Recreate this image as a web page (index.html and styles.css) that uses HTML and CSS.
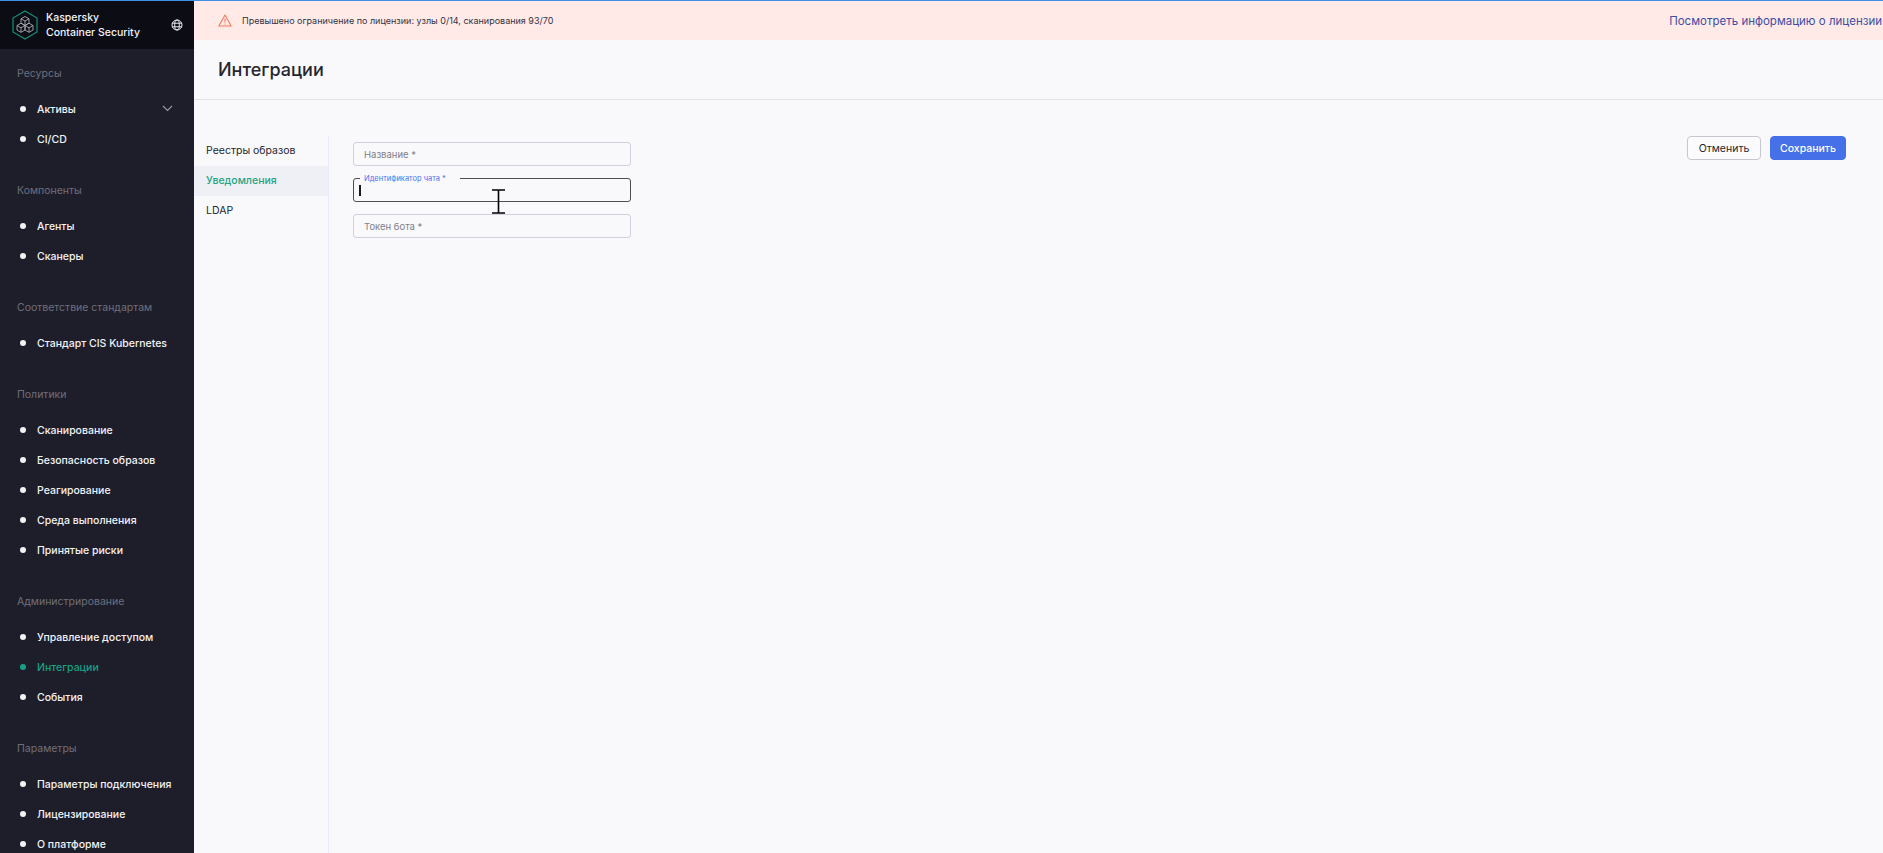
FILE: index.html
```html
<!DOCTYPE html>
<html lang="ru">
<head>
    <meta charset="UTF-8">
    <title>Интеграции</title>
    <link rel="stylesheet" href="styles.css">
</head>
<body>
    <div class="top-line"></div>
    <div class="app">
        <aside class="sidebar">
            <div class="brand">
                <svg class="brand-logo" width="26" height="30" viewBox="0 0 26 30" fill="none">
                    <path d="M13 1 L25 8 V22 L13 29 L1 22 V8 Z" stroke="#14907a" stroke-width="1.2"/>
                    <g stroke="#a9a9b2" stroke-width="0.9">
                        <path d="M13 6.5 L17 8.8 V13.2 L13 15.5 L9 13.2 V8.8 Z M9 8.8 L13 11 L17 8.8 M13 11 V15.5"/>
                        <path d="M9 13.2 L13 15.5 V20 L9 22.3 L5 20 V15.5 Z M5 15.5 L9 17.8 L13 15.5 M9 17.8 V22.3"/>
                        <path d="M17 13.2 L21 15.5 V20 L17 22.3 L13 20 V15.5 Z M13 15.5 L17 17.8 L21 15.5 M17 17.8 V22.3"/>
                    </g>
                </svg>
                <div class="brand-name">Kaspersky<br>Container Security</div>
                <svg class="globe" width="12" height="12" viewBox="0 0 12 12" fill="none" stroke="#e8e8ec" stroke-width="1">
                    <circle cx="6" cy="6" r="5"/>
                    <ellipse cx="6" cy="6" rx="2.3" ry="5"/>
                    <path d="M1 4.2 H11 M1 7.8 H11"/>
                </svg>
            </div>
            <nav class="menu">
                <div class="menu-group">
                    <div class="menu-title">Ресурсы</div>
                    <a class="menu-item">Активы
                        <svg class="chevron" width="11" height="7" viewBox="0 0 11 7" fill="none" stroke="#9a9aa4" stroke-width="1.1"><path d="M1 1 L5.5 5.5 L10 1"/></svg>
                    </a>
                    <a class="menu-item">CI/CD</a>
                </div>
                <div class="menu-group">
                    <div class="menu-title">Компоненты</div>
                    <a class="menu-item">Агенты</a>
                    <a class="menu-item">Сканеры</a>
                </div>
                <div class="menu-group">
                    <div class="menu-title">Соответствие стандартам</div>
                    <a class="menu-item">Стандарт CIS Kubernetes</a>
                </div>
                <div class="menu-group">
                    <div class="menu-title">Политики</div>
                    <a class="menu-item">Сканирование</a>
                    <a class="menu-item">Безопасность образов</a>
                    <a class="menu-item">Реагирование</a>
                    <a class="menu-item">Среда выполнения</a>
                    <a class="menu-item">Принятые риски</a>
                </div>
                <div class="menu-group">
                    <div class="menu-title">Администрирование</div>
                    <a class="menu-item">Управление доступом</a>
                    <a class="menu-item active">Интеграции</a>
                    <a class="menu-item">События</a>
                </div>
                <div class="menu-group">
                    <div class="menu-title">Параметры</div>
                    <a class="menu-item">Параметры подключения</a>
                    <a class="menu-item">Лицензирование</a>
                    <a class="menu-item">О платформе</a>
                </div>
            </nav>
        </aside>

        <main class="main">
            <div class="banner">
                <svg class="banner-icon" width="14" height="13" viewBox="0 0 14 13" fill="none" stroke="#f4795b" stroke-width="1.1">
                    <path d="M7 1 L13.2 12 H0.8 Z" stroke-linejoin="round"/>
                    <path d="M7 4.6 V8.4 M7 9.6 V10.6"/>
                </svg>
                <span class="banner-text">Превышено ограничение по лицензии: узлы 0/14, сканирования 93/70</span>
                <a class="banner-link">Посмотреть информацию о лицензии</a>
            </div>
            <header class="page-head">
                <h1>Интеграции</h1>
            </header>
            <div class="content">
                <div class="subnav">
                    <a class="subnav-item">Реестры образов</a>
                    <a class="subnav-item active">Уведомления</a>
                    <a class="subnav-item">LDAP</a>
                </div>
                <div class="form-area">
                    <form class="form">
                        <div class="field"><span class="placeholder">Название *</span></div>
                        <div class="field focused">
                            <span class="float-label">Идентификатор чата *</span>
                            <span class="caret"></span>
                            <svg class="mouse-cursor" width="15" height="25" viewBox="0 0 15 25" fill="none" stroke="#000" stroke-width="1.6">
                                <path d="M1 1 H14 M7.5 1 V24 M1 24 H14"/>
                            </svg>
                        </div>
                        <div class="field"><span class="placeholder">Токен бота *</span></div>
                    </form>
                    <div class="actions">
                        <button class="btn">Отменить</button>
                        <button class="btn primary">Сохранить</button>
                    </div>
                </div>
            </div>
        </main>
    </div>
</body>
</html>
```

FILE: styles.css
```css
* {
    box-sizing: border-box;
}
html, body {
    height: 100%;
}
body {
    margin: 0;
    overflow: hidden;
    font-family: Inter, "Noto Sans", sans-serif;
    background: #f9f9fc;
    color: #1e1e2a;
    display: flex;
    flex-direction: column;
}
.top-line {
    height: 1px;
    flex: none;
    background: #3d8fe8;
}
.app {
    flex: 1;
    min-height: 0;
    display: flex;
}

/* sidebar */
.sidebar {
    width: 194px;
    flex: none;
    background: #1e1e2a;
    overflow: hidden;
}
.brand {
    height: 48px;
    background: #0b0c14;
    display: flex;
    align-items: center;
    padding: 0 11px 0 12px;
}
.brand-logo {
    flex: none;
}
.brand-name {
    margin-left: 8px;
    flex: 1;
    font-size: 10.5px;
    line-height: 15px;
    font-weight: 500;
    color: #f2f4fa;
    white-space: nowrap;
}
.globe {
    flex: none;
    margin-bottom: 1px;
}
.menu {
    padding: 15px 0 0;
}
.menu-group {
    margin-bottom: 27px;
}
.menu-title {
    height: 20px;
    line-height: 20px;
    padding-left: 17px;
    margin-bottom: 10px;
    font-size: 10.5px;
    color: #6f6f7a;
    white-space: nowrap;
}
.menu-item {
    height: 30px;
    display: flex;
    align-items: center;
    position: relative;
    padding-left: 37px;
    font-size: 10.5px;
    font-weight: 500;
    color: #f2f2f5;
    white-space: nowrap;
}
.menu-item::before {
    content: "";
    position: absolute;
    left: 20px;
    top: 12px;
    width: 6px;
    height: 6px;
    border-radius: 50%;
    background: #f2f2f5;
}
.menu-item.active {
    color: #17a184;
}
.menu-item.active::before {
    background: #17a184;
}
.chevron {
    position: absolute;
    left: 162px;
    top: 11px;
}

/* main area */
.main {
    flex: 1;
    min-width: 0;
    display: flex;
    flex-direction: column;
}
.banner {
    height: 39px;
    flex: none;
    background: #ffeae8;
    display: flex;
    align-items: center;
    padding: 0 1px 0 24px;
}
.banner-icon {
    flex: none;
}
.banner-text {
    margin-left: 10px;
    font-size: 9px;
    color: #33333f;
}
.banner-link {
    margin-left: auto;
    font-size: 11.5px;
    color: #3e4da3;
    white-space: nowrap;
}
.page-head {
    height: 60px;
    flex: none;
    border-bottom: 1px solid #e2e2e8;
    display: flex;
    align-items: center;
    padding-left: 24px;
}
.page-head h1 {
    margin: 0 0 1px;
    font-size: 18px;
    font-weight: 500;
    color: #26262e;
}
.content {
    flex: 1;
    min-height: 0;
    display: flex;
    padding-top: 36px;
}
.subnav {
    width: 135px;
    flex: none;
    border-right: 1px solid #eaeaff;
}
.subnav-item {
    display: block;
    height: 30px;
    line-height: 30px;
    padding-left: 12px;
    font-size: 10.5px;
    color: #26262e;
}
.subnav-item.active {
    background: #eef0f5;
    color: #22a587;
    font-weight: 500;
}
.form-area {
    flex: 1;
    min-width: 0;
    display: flex;
    justify-content: space-between;
    align-items: flex-start;
    padding: 0 37px 0 24px;
}
.form {
    width: 278px;
    display: flex;
    flex-direction: column;
    gap: 12px;
    padding-top: 6px;
}
.field {
    height: 24px;
    position: relative;
    display: flex;
    align-items: center;
    padding-left: 10px;
    border: 1px solid #cfd0e0;
    border-radius: 3px;
}
.placeholder {
    font-size: 9.5px;
    color: #808088;
}
.field.focused {
    border-color: #4d4d55;
    border-width: 1px;
}
.float-label {
    position: absolute;
    left: 6px;
    top: -5px;
    padding: 0 5px 0 4px;
    width: 100px;
    background: #f9f9fc;
    font-size: 7.5px;
    line-height: 9px;
    color: #4a72ee;
    white-space: nowrap;
}
.caret {
    position: absolute;
    left: 5px;
    top: 6px;
    width: 2px;
    height: 11px;
    background: #1a1a1a;
}
.mouse-cursor {
    position: absolute;
    left: 137px;
    top: 10px;
}
.actions {
    display: flex;
    gap: 9px;
}
.btn {
    height: 24px;
    padding: 0;
    width: 74px;
    border: 1px solid #c6c7cf;
    border-radius: 4px;
    background: #fbfbfd;
    font-family: inherit;
    font-size: 10.5px;
    color: #26262e;
}
.btn.primary {
    width: 76px;
    border-color: #4570e8;
    background: #4570e8;
    color: #fff;
    font-weight: 500;
}
```
